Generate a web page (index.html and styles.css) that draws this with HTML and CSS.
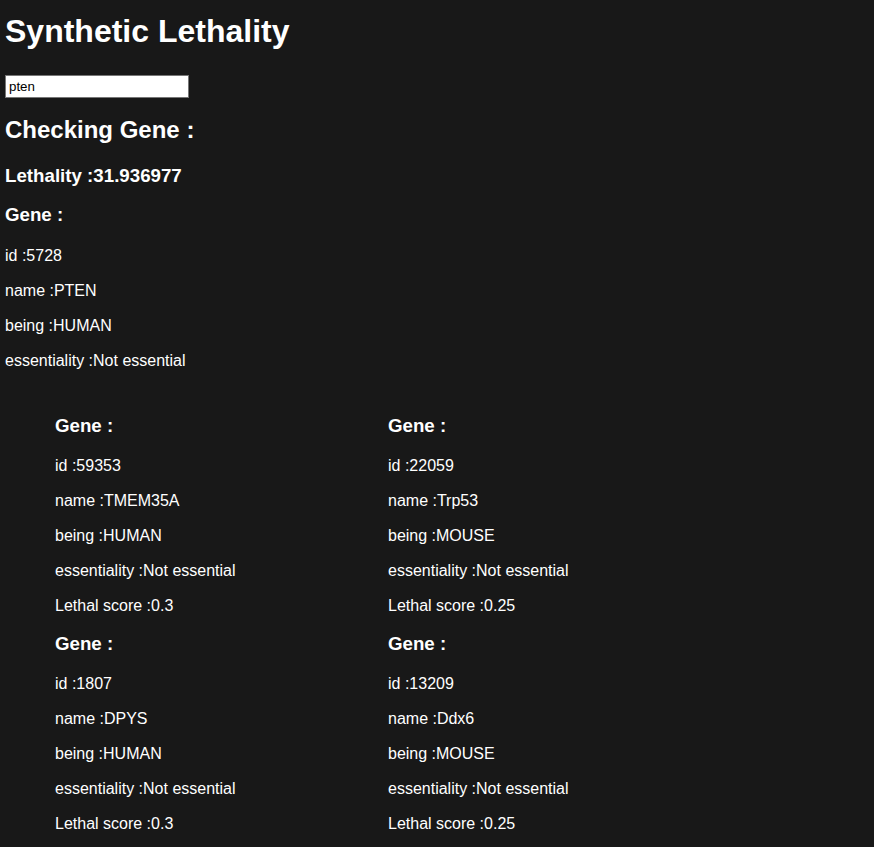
FILE: index.html
```html
<!DOCTYPE html>
<html lang="en">
<head>
<meta charset="utf-8">
<title>Synthetic Lethality</title>
<link rel="stylesheet" href="styles.css">
</head>
<body>
<div class="page">
  <h1 class="title">Synthetic Lethality</h1>
  <input class="search" type="text" value="pten">
  <h2 class="checking">Checking Gene :</h2>
  <h3 class="lethality">Lethality :31.936977</h3>
  <div class="gene main-gene">
    <h4 class="gene-title">Gene :</h4>
    <p class="field">id :5728</p>
    <p class="field">name :PTEN</p>
    <p class="field">being :HUMAN</p>
    <p class="field">essentiality :Not essential</p>
  </div>
  <div class="partners">
    <div class="gene">
      <h4 class="gene-title">Gene :</h4>
      <p class="field">id :59353</p>
      <p class="field">name :TMEM35A</p>
      <p class="field">being :HUMAN</p>
      <p class="field">essentiality :Not essential</p>
      <p class="field">Lethal score :0.3</p>
    </div>
    <div class="gene">
      <h4 class="gene-title">Gene :</h4>
      <p class="field">id :22059</p>
      <p class="field">name :Trp53</p>
      <p class="field">being :MOUSE</p>
      <p class="field">essentiality :Not essential</p>
      <p class="field">Lethal score :0.25</p>
    </div>
    <div class="gene">
      <h4 class="gene-title">Gene :</h4>
      <p class="field">id :1807</p>
      <p class="field">name :DPYS</p>
      <p class="field">being :HUMAN</p>
      <p class="field">essentiality :Not essential</p>
      <p class="field">Lethal score :0.3</p>
    </div>
    <div class="gene">
      <h4 class="gene-title">Gene :</h4>
      <p class="field">id :13209</p>
      <p class="field">name :Ddx6</p>
      <p class="field">being :MOUSE</p>
      <p class="field">essentiality :Not essential</p>
      <p class="field">Lethal score :0.25</p>
    </div>
  </div>
</div>
</body>
</html>
```

FILE: styles.css
```css
html, body {
  margin: 0;
  padding: 0;
  background: #181818;
}

body {
  color: #ffffff;
  font-family: "Liberation Sans", Arial, sans-serif;
}

.page {
  display: flex;
  flex-direction: column;
  align-items: flex-start;
  padding: 13px 5px 20px 5px;
}

.title {
  font-size: 32px;
  line-height: 37px;
  font-weight: bold;
  margin: 0 0 25px 0;
}

.search {
  box-sizing: border-box;
  width: 184px;
  height: 23px;
  margin: 0;
  padding: 1px 3px;
  border: 1px solid #767676;
  background: #ffffff;
  color: #000000;
  font-family: "Liberation Sans", Arial, sans-serif;
  font-size: 13.33px;
  outline: none;
}

.checking {
  font-size: 24px;
  line-height: 28px;
  font-weight: bold;
  margin: 18px 0 0 0;
}

.lethality {
  font-size: 18.72px;
  line-height: 22px;
  font-weight: bold;
  margin: 21px 0 0 0;
}

.main-gene {
  margin-top: 17px;
}

.gene {
  display: flex;
  flex-direction: column;
}

.gene-title {
  font-size: 18.72px;
  line-height: 22px;
  font-weight: bold;
  margin: 0 0 20px 0;
}

.partners .gene-title {
  margin-bottom: 19px;
}

.field {
  font-size: 16px;
  line-height: 19px;
  margin: 0 0 16px 0;
}

.field:last-child {
  margin-bottom: 0;
}

.partners {
  display: grid;
  grid-template-columns: 333px 333px;
  row-gap: 18px;
  margin: 45px 0 0 50px;
}
```
